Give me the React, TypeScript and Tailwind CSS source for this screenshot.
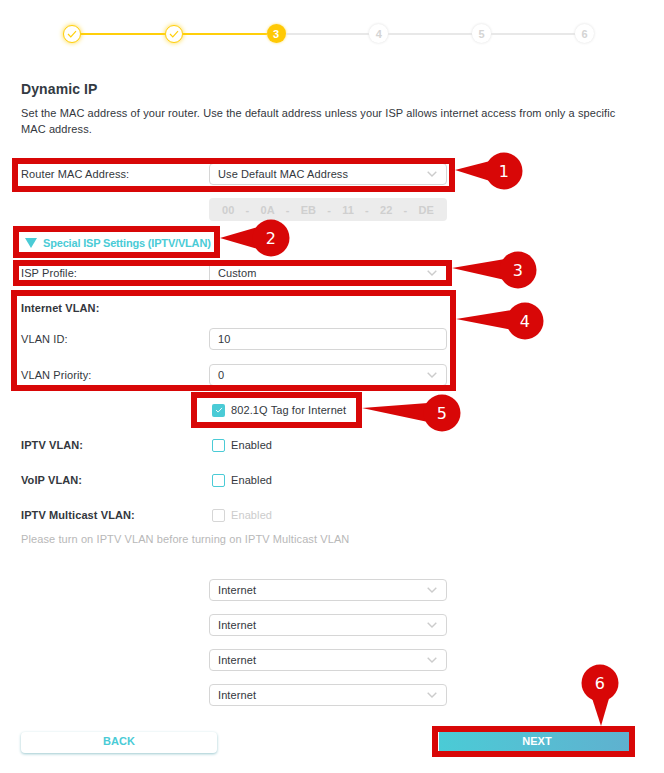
const RED = "#d80707";

function Check({ className }: { className: string }) {
  return (
    <svg viewBox="0 0 10 8" fill="none" stroke="currentColor" strokeWidth="1.2" className={className}>
      <path d="M1 4l2.8 2.8L9 1.2" />
    </svg>
  );
}

function Chevron() {
  return (
    <svg viewBox="0 0 10 6" fill="none" stroke="#cccccc" strokeWidth="1.4" className="h-[6px] w-[10px]">
      <path d="M.7.7 5 5 9.3.7" />
    </svg>
  );
}

function DoneStep() {
  return (
    <div className="flex h-[18px] w-[18px] shrink-0 items-center justify-center rounded-full border-[1.5px] border-[#ffcf0a] bg-white text-[#ffcf0a] shadow-[0_0_5px_#ffd633]">
      <Check className="h-[8px] w-[10px]" />
    </div>
  );
}

function TodoStep({ n }: { n: number }) {
  return (
    <div className="flex h-[19px] w-[19px] shrink-0 items-center justify-center rounded-full bg-white text-[11px] font-bold text-[#d4d4d4] shadow-[0_0_3px_#dddddd]">
      {n}
    </div>
  );
}

function Stepper() {
  return (
    <div className="ml-[63px] flex h-[19px] w-[531px] items-center">
      <DoneStep />
      <div className="h-[2px] flex-1 bg-[#ffcf0a]" />
      <DoneStep />
      <div className="h-[2px] flex-1 bg-[#ffcf0a]" />
      <div className="flex h-[19px] w-[19px] shrink-0 items-center justify-center rounded-full bg-[#ffc905] text-[11px] font-bold text-white shadow-[0_0_3px_#ffdf66]">
        3
      </div>
      <div className="h-[2px] flex-1 bg-[#e8e8e8]" />
      <TodoStep n={4} />
      <div className="h-[2px] flex-1 bg-[#e8e8e8]" />
      <TodoStep n={5} />
      <div className="h-[2px] flex-1 bg-[#e8e8e8]" />
      <TodoStep n={6} />
    </div>
  );
}

function Select({ value }: { value: string }) {
  return (
    <div className="flex h-[22px] w-[238px] items-center justify-between rounded-[4px] border border-[#d6d6d6] bg-white pl-[8px] pr-[9px]">
      <span>{value}</span>
      <Chevron />
    </div>
  );
}

function Row({ label, bold, children, className }: { label?: string; bold?: boolean; children?: React.ReactNode; className: string }) {
  return (
    <div className={`flex items-center ${className}`}>
      <div className={`w-[188px] shrink-0 ${bold ? "font-bold" : ""}`}>{label}</div>
      {children}
    </div>
  );
}

function CheckRow({ label, className, disabled }: { label: string; className: string; disabled?: boolean }) {
  return (
    <Row label={label} bold className={`h-[16px] ${className}`}>
      <div className={`ml-[3px] h-[13px] w-[13px] rounded-[2px] border ${disabled ? "border-[#d6d6d6]" : "border-[#4acbd6]"}`} />
      <span className={`ml-[6px] ${disabled ? "text-[#cccccc]" : ""}`}>Enabled</span>
    </Row>
  );
}

function MacAddress() {
  const parts = ["00", "0A", "EB", "11", "22", "DE"];
  return (
    <div className="ml-[188px] mt-[13px] flex h-[23px] w-[238px] items-center justify-between rounded-[4px] bg-[#ececec] px-[13px] font-bold text-[#cfcfcf]">
      {parts.map((p, i) => (
        <span key={p} className="contents">
          {i > 0 && <span>-</span>}
          <span>{p}</span>
        </span>
      ))}
    </div>
  );
}

const boxes = [
  "left-[12px] top-[158px] h-[34px] w-[443px]",
  "left-[13px] top-[226px] h-[32px] w-[207px]",
  "left-[13px] top-[260px] h-[26px] w-[439px]",
  "left-[11px] top-[290px] h-[101px] w-[445px]",
  "left-[191px] top-[392px] h-[36px] w-[171px]",
  "left-[432px] top-[726px] h-[31px] w-[203px]",
];

const callouts = [
  { n: 1, cx: 504, cy: 171, tail: "455,170 490,161 490,181" },
  { n: 2, cx: 271, cy: 238, tail: "220,238 258,227 258,249" },
  { n: 3, cx: 518, cy: 270, tail: "452,268 505,259 505,280" },
  { n: 4, cx: 525, cy: 321, tail: "456,319 512,310 512,330" },
  { n: 5, cx: 442, cy: 413, tail: "362,408 428,403 428,422" },
  { n: 6, cx: 600, cy: 683, tail: "601,726 591,695 610,695" },
];

function Annotations() {
  return (
    <>
      {boxes.map((b) => (
        <div key={b} className={`absolute border-[6px] border-[#d80707] ${b}`} />
      ))}
      <svg viewBox="0 0 664 773" className="pointer-events-none absolute left-0 top-0 h-[773px] w-[664px]">
        {callouts.map((c) => (
          <g key={c.n}>
            <polygon points={c.tail} fill={RED} />
            <circle cx={c.cx} cy={c.cy} r="18.5" fill={RED} />
            <text x={c.cx} y={c.cy + 6} textAnchor="middle" fill="white" fontSize="16" fontFamily="DejaVu Sans, sans-serif">
              {c.n}
            </text>
          </g>
        ))}
      </svg>
    </>
  );
}

export default function App() {
  return (
    <div className="relative h-[773px] w-[664px] overflow-hidden bg-white pt-[24px] font-['Liberation_Sans',sans-serif] text-[11px] leading-[16px] tracking-[0.1px] text-[#33373d]">
      <Stepper />
      <div className="px-[21px]">
        <h2 className="mt-[38px] text-[14px] font-bold leading-[16px] text-[#333a42]">Dynamic IP</h2>
        <p className="mt-[8px] w-[600px]">
          Set the MAC address of your router. Use the default address unless your ISP allows internet access from only a specific MAC address.
        </p>

        <Row label="Router MAC Address:" className="mt-[26px]">
          <Select value="Use Default MAC Address" />
        </Row>
        <MacAddress />

        <div className="mt-[14px] flex h-[16px] items-center font-bold tracking-[-0.18px] text-[#4acbd6]">
          <svg viewBox="0 0 12 10" className="ml-[4px] h-[10px] w-[12px]">
            <path d="M0 0h12L6 10z" fill="#4acbd6" />
          </svg>
          <span className="ml-[6px]">Special ISP Settings (IPTV/VLAN)</span>
        </div>

        <Row label="ISP Profile:" className="mt-[11px]">
          <Select value="Custom" />
        </Row>

        <div className="mt-[16px] font-bold">Internet VLAN:</div>
        <Row label="VLAN ID:" className="mt-[12px]">
          <div className="flex h-[22px] w-[238px] items-center rounded-[4px] border border-[#d6d6d6] pl-[8px]">10</div>
        </Row>
        <Row label="VLAN Priority:" className="mt-[14px]">
          <Select value="0" />
        </Row>

        <Row className="mt-[16px] h-[16px]">
          <div className="ml-[3px] flex h-[13px] w-[13px] items-center justify-center rounded-[2px] bg-[#4acbd6] text-white">
            <Check className="h-[6px] w-[8px]" />
          </div>
          <span className="ml-[6px]">802.1Q Tag for Internet</span>
        </Row>

        <CheckRow label="IPTV VLAN:" className="mt-[19px]" />
        <CheckRow label="VoIP VLAN:" className="mt-[19px]" />
        <CheckRow label="IPTV Multicast VLAN:" className="mt-[19px]" disabled />
        <p className="mt-[8px] text-[#b8b8b8]">Please turn on IPTV VLAN before turning on IPTV Multicast VLAN</p>

        <div className="ml-[188px] mt-[32px] flex flex-col gap-[13px]">
          <Select value="Internet" />
          <Select value="Internet" />
          <Select value="Internet" />
          <Select value="Internet" />
        </div>

        <div className="mt-[26px] flex items-start">
          <button className="h-[21px] w-[196px] rounded-[4px] bg-white pb-[3px] font-bold text-[#4acbd6] shadow-[0_1px_3px_#9cc9d0]">
            BACK
          </button>
          <button className="ml-[222px] h-[20px] w-[196px] bg-gradient-to-r from-[#4acbd6] to-[#5fb0cf] pb-[2px] font-bold text-white">
            NEXT
          </button>
        </div>
      </div>
      <Annotations />
    </div>
  );
}
